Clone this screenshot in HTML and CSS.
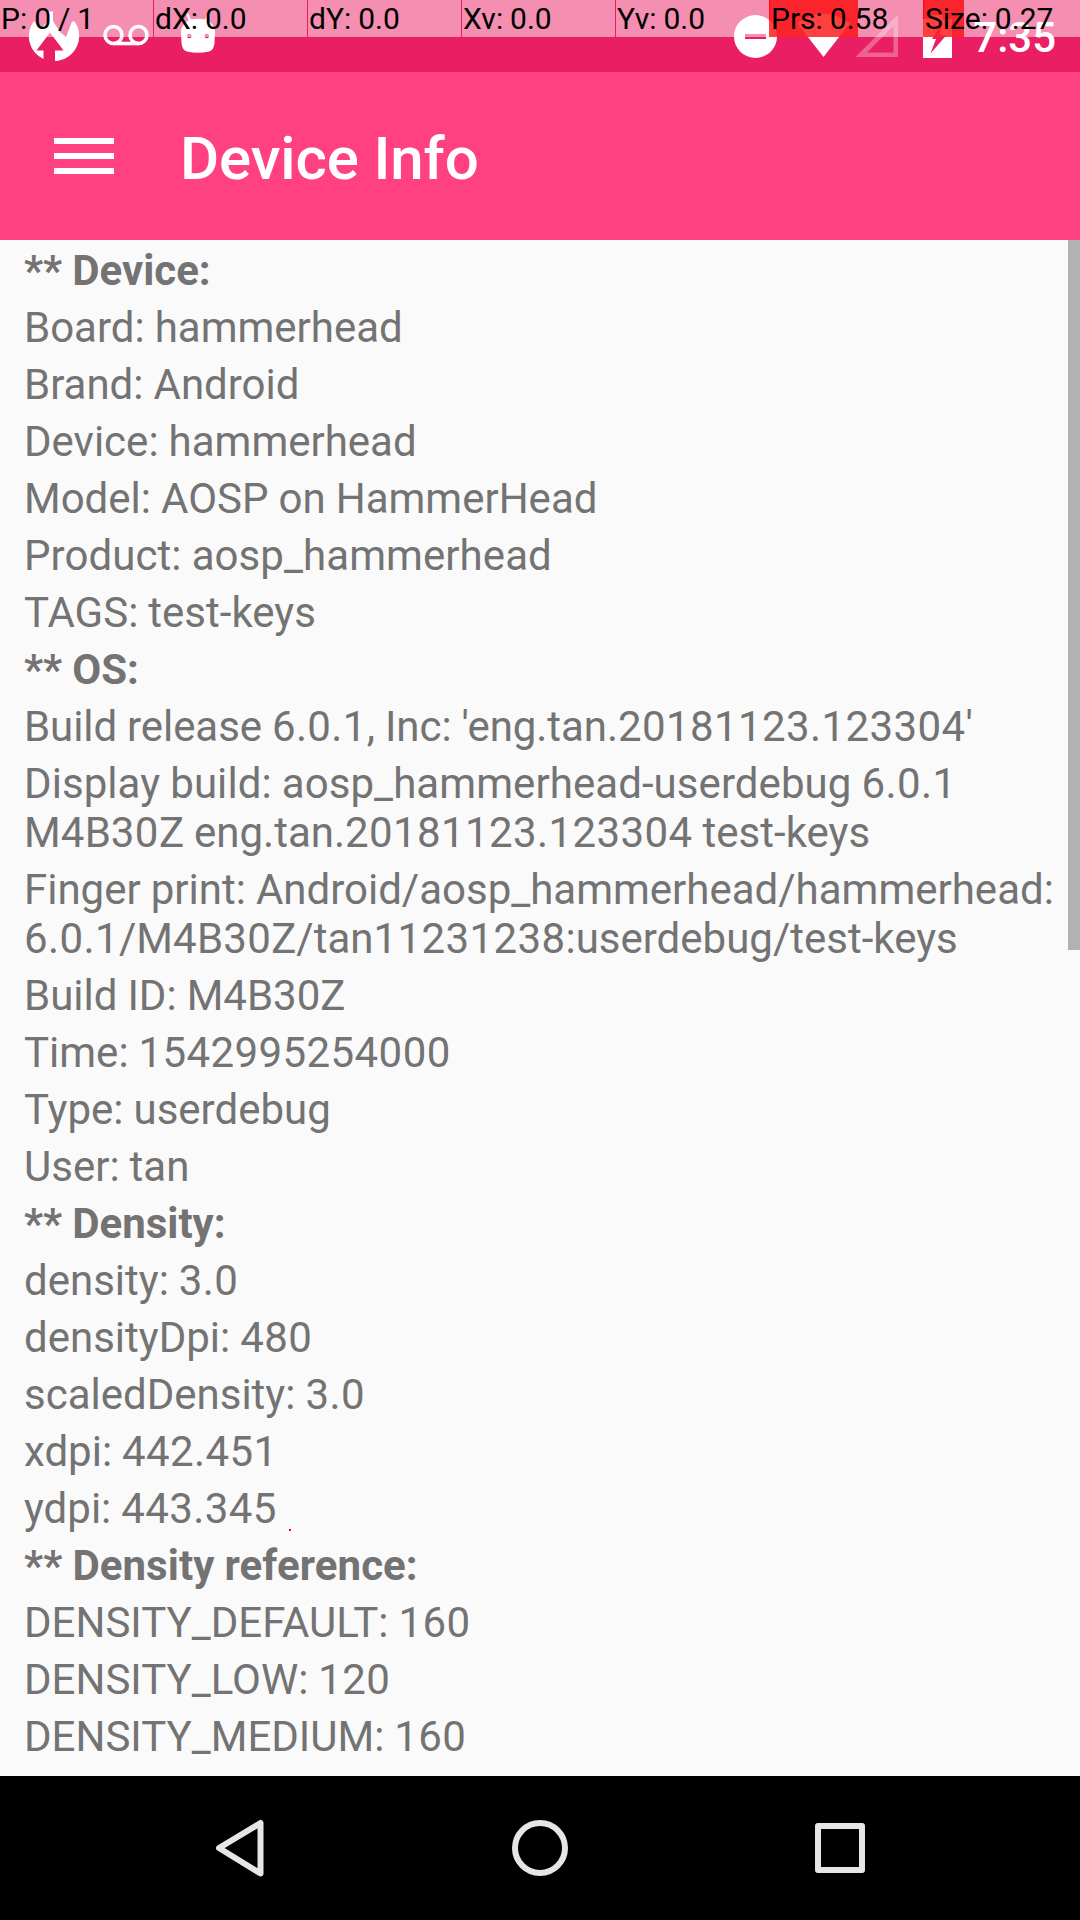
FILE: index.html
```html
<!DOCTYPE html>
<html lang="en">
<head>
<meta charset="utf-8">
<title>Device Info</title>
<link rel="stylesheet" href="styles.css">
</head>
<body>
<div class="screen">
  <header class="status-bar">
    <svg class="status-icons" width="1080" height="72" viewBox="0 0 1080 72" fill="#fff" aria-hidden="true">
      <path d="M48 11.500H53V21L60 32L66 37L72 21.500H74.500A25 25 0 0 1 55 61V50.500H63.500L50 32.500L36.500 50.500H43.500V59A25 25 0 0 1 34 21L41 29L48 21Z"/>
      <g fill="none" stroke="#fff" stroke-width="3.600"><circle cx="113.500" cy="35" r="8.500"/><circle cx="138.500" cy="35" r="8.500"/><path d="M113.500 43.500H138.500"/></g>
      <path fill-rule="evenodd" d="M188 13L191 19.500Q198 18 205 19.500L208.500 13L210 14L207.500 20.500Q214 24 215 31L214.500 43Q214 50 209 51.500Q198 54 187 51.500Q182 50 181.500 43L181 31Q182 24 188.500 20.500L186.500 14ZM187 36a2.300 2.300 0 1 0 4.600 0a2.300 2.300 0 1 0-4.600 0ZM204.500 36a2.300 2.300 0 1 0 4.600 0a2.300 2.300 0 1 0-4.600 0Z"/>
      <path fill-rule="evenodd" d="M755.500 15a21.500 21.500 0 1 1 0 43a21.500 21.500 0 1 1 0-43ZM745 34V39H766V34Z"/>
      <path d="M797 23Q823 5 850 23L823.500 57Z"/>
      <path fill-rule="evenodd" fill-opacity=".3" d="M898 14.500V57H855.500ZM893.500 26V52.500H867Z"/>
      <path fill-rule="evenodd" d="M923 19H931V15H943V19H952V58H923ZM942 22L932 39H936L930.500 53.500L946.500 35H940Z"/>
    </svg>
    <time class="clock">7:35</time>
    <div class="pointer-bar">
      <div class="cell">P: 0 / 1</div>
      <div class="cell">dX: 0.0</div>
      <div class="cell">dY: 0.0</div>
      <div class="cell">Xv: 0.0</div>
      <div class="cell">Yv: 0.0</div>
      <div class="cell"><i class="level" style="width:89px"></i><span>Prs: 0.58</span></div>
      <div class="cell"><i class="level" style="width:41px"></i><span>Size: 0.27</span></div>
    </div>
  </header>
  <div class="toolbar">
    <div class="menu"><i></i><i></i><i></i></div>
    <h1>Device Info</h1>
  </div>
  <main class="content">
    <p class="section">** Device:</p>
    <p>Board: hammerhead</p>
    <p>Brand: Android</p>
    <p>Device: hammerhead</p>
    <p>Model: AOSP on HammerHead</p>
    <p class="loose">Product: aosp_hammerhead</p>
    <p>TAGS: test-keys</p>
    <p class="section">** OS:</p>
    <p class="tight">Build release <span class="num">6.0.1</span>, Inc: 'eng.tan.<span class="num">20181123.123304</span>'</p>
    <p><span class="loose">Display build: aosp_hammerhead-userdebug <span class="num">6.0.1</span></span><br>M<span class="num">4</span>B<span class="num">30</span>Z eng.tan.<span class="num">20181123.123304</span> test-keys</p>
    <p>Finger print: Android/aosp_hammerhead/hammerhead:<br><span class="num">6.0.1</span>/M<span class="num">4</span>B<span class="num">30</span>Z/tan<span class="num">11231238</span>:userdebug/test-keys</p>
    <p>Build ID: M4B30Z</p>
    <p>Time: <span class="num">1542995254000</span></p>
    <p>Type: userdebug</p>
    <p>User: tan</p>
    <p class="section">** Density:</p>
    <p>density: <span class="num">3.0</span></p>
    <p>densityDpi: <span class="num">480</span></p>
    <p>scaledDensity: <span class="num">3.0</span></p>
    <p>xdpi: <span class="num">442.451</span></p>
    <p>ydpi: <span class="num">443.345</span></p>
    <p class="section loose">** Density reference:</p>
    <p>DENSITY_DEFAULT: <span class="num">160</span></p>
    <p>DENSITY_LOW: <span class="num">120</span></p>
    <p>DENSITY_MEDIUM: <span class="num">160</span></p>
    <i class="scrollbar"></i>
    <i class="touch-point"></i>
  </main>
  <nav class="nav-bar">
    <svg viewBox="0 0 80 80" width="80" height="80"><path d="M60.500 15V65.500L19 40Z"/></svg>
    <svg viewBox="0 0 80 80" width="80" height="80"><circle cx="40" cy="40" r="25"/></svg>
    <svg viewBox="0 0 80 80" width="80" height="80"><rect x="18" y="18" width="44" height="44"/></svg>
  </nav>
</div>
</body>
</html>
```
FILE: styles.css
```css
* { box-sizing: border-box; }

body {
  margin: 0;
  font-family: Roboto, sans-serif;
}

.screen {
  display: flex;
  flex-direction: column;
  width: 1080px;
  height: 1920px;
  overflow: hidden;
  background: #fafafa;
}

.status-bar {
  position: relative;
  display: flex;
  flex: none;
  height: 72px;
  background: #e91e63;
}

.status-icons { position: absolute; inset: 0; }

.clock {
  margin: 13px 24px 0 auto;
  color: #fff;
  font-size: 42px;
  font-weight: 500;
  line-height: 49px;
}

.pointer-bar {
  position: absolute;
  inset: 0 0 auto;
  display: grid;
  grid-template-columns: repeat(6, 153px) 156px;
  column-gap: 1px;
  height: 37px;
}

.cell {
  position: relative;
  padding-left: 1px;
  background: rgba(255, 255, 255, .5);
  color: #000;
  font-size: 30px;
  line-height: 37px;
  white-space: nowrap;
  word-spacing: -.5px;
}

.cell span { position: relative; }

.level {
  position: absolute;
  top: 0;
  bottom: 0;
  left: -1px;
  background: rgba(255, 0, 0, .75);
}

.toolbar {
  display: flex;
  flex: none;
  align-items: center;
  height: 168px;
  padding-left: 54px;
  background: #ff4081;
}

.menu {
  display: grid;
  gap: 9px;
  width: 60px;
}

.menu i { height: 6px; background: #fff; }

h1 {
  margin: 5px 0 0 66px;
  color: #fff;
  font-size: 60px;
  font-weight: 500;
  letter-spacing: -.13px;
  line-height: 70px;
}

.content {
  position: relative;
  flex: 1;
  padding: 2px 24px 0;
  overflow: hidden;
  color: #737373;
  font-size: 42px;
  line-height: 49px;
  white-space: nowrap;
  word-spacing: -.4px;
}

.content p { margin: 0; padding: 4px 0; }

.content .section { font-weight: 700; }

.loose { letter-spacing: .07px; }

.tight { letter-spacing: -.07px; }

.num { letter-spacing: .4px; }

.scrollbar {
  position: absolute;
  top: 0;
  right: 0;
  width: 12px;
  height: 710px;
  background: #b2b2b2;
}

.touch-point {
  position: absolute;
  top: 1289px;
  left: 289px;
  width: 2px;
  height: 2px;
  background: #f00;
}

.nav-bar {
  display: flex;
  flex: none;
  align-items: center;
  justify-content: center;
  gap: 220px;
  height: 144px;
  background: #000;
}

.nav-bar svg {
  fill: none;
  stroke: #e6e6e6;
  stroke-width: 6;
  stroke-linejoin: round;
}
```
